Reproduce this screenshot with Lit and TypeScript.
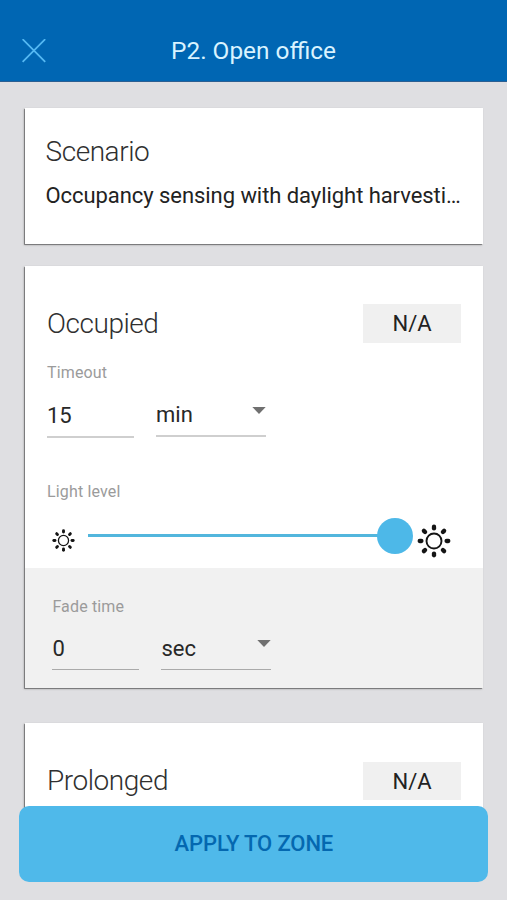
import { LitElement, html, css, svg } from "lit";
import { customElement, property } from "lit/decorators.js";

@customElement("sun-icon")
class SunIcon extends LitElement {
  static styles = css`
    :host { display: block; flex: none; }
    svg { display: block; width: 100%; height: 100%; overflow: visible; }
  `;
  @property({ type: Number }) core = 7.5;
  @property({ type: Number }) ring = 1.9;
  @property({ type: Number }) inner = 12.6;
  @property({ type: Number }) outer = 14.3;
  @property({ type: Number }) ray = 4.3;
  render() {
    return html`<svg viewBox="-17 -17 34 34" fill="none" stroke="#151515">
      <circle r=${this.core} stroke-width=${this.ring}></circle>
      ${[0, 45, 90, 135, 180, 225, 270, 315].map(
        (a) => svg`<line x1="0" x2="0" y1=${-this.inner} y2=${-this.outer}
          stroke-width=${this.ray} stroke-linecap="round" transform="rotate(${a})"></line>`
      )}
    </svg>`;
  }
}

@customElement("time-field")
class TimeField extends LitElement {
  static styles = css`
    :host { display: block; }
    .label { font-size: 16px; line-height: 20px; letter-spacing: 0.15px; color: #9b9b9b; }
    .row { display: flex; gap: 22px; margin-top: 19px; align-items: flex-start; }
    .box {
      box-sizing: border-box; height: 36px; line-height: 28px; font-size: 22px;
      color: #282828; border-bottom: 2px solid #cfcfcf;
    }
    .value { width: 87px; letter-spacing: -0.2px; }
    .unit { width: 110px; height: 35px; line-height: 25px; display: flex; justify-content: space-between; }
    .arrow { width: 14px; height: 7px; margin-top: 5px; fill: #707070; }
    :host([shaded]) .box { border-bottom: 1px solid #aaa; height: 35px; line-height: 28px; }
    :host([shaded]) .label { padding-top: 1px; margin-bottom: -1px; }
  `;
  @property() label = "";
  @property() value = "";
  @property() unit = "";
  render() {
    return html`
      <div class="label">${this.label}</div>
      <div class="row">
        <div class="box value">${this.value}</div>
        <div class="box unit">
          <span>${this.unit}</span>
          <svg class="arrow" viewBox="0 0 14 7"><path d="M0.3 0H13.7L7 7Z"></path></svg>
        </div>
      </div>`;
  }
}

@customElement("app-root")
class AppRoot extends LitElement {
  static styles = css`
    :host {
      display: flex; flex-direction: column; position: relative; height: 900px; overflow: hidden;
      background: #dfdfe2; font-family: Roboto, "Liberation Sans", sans-serif;
    }
    .bar {
      flex: none; box-sizing: border-box; height: 82px; padding: 20px 22px 0; background: #0066b3;
      border-bottom: 1px solid #2b5f92;
      display: grid; grid-template-columns: 24px 1fr 24px; align-items: center;
    }
    .close { width: 24px; height: 24px; display: block; }
    .title { font-size: 24.4px; line-height: 30px; text-align: center; color: #d9f3ff; }
    .cards {
      flex: none; box-sizing: border-box; height: 728px; overflow: hidden;
      padding: 26px 24px 0 25px; display: flex; flex-direction: column;
    }
    .card {
      flex: none; box-sizing: border-box; background: #fff;
      box-shadow: -1px 1px 2px rgba(0, 0, 0, 0.3), -1px 1px 0 rgba(0, 0, 0, 0.3);
    }
    .scenario { height: 136px; padding: 28px 18px 0 20.5px; }
    .heading { font-size: 28px; line-height: 32px; font-weight: 300; letter-spacing: -0.45px; color: #303030; }
    .summary {
      margin-top: 14px; font-size: 22px; line-height: 28px; letter-spacing: -0.06px; color: #222; white-space: nowrap;
    }
    .occupied { height: 422px; margin-top: 22px; }
    .prolonged { height: 300px; margin-top: 35px; }
    .head {
      display: flex; justify-content: space-between; align-items: center;
      height: 39px; padding: 38px 22px 0;
    }
    .prolonged .head { padding-top: 39px; height: 38px; }
    .badge {
      width: 98px; height: 39px; line-height: 39px; background: #f0f0f0;
      text-align: center; font-size: 22px; color: #222;
    }
    .prolonged .badge { height: 38px; }
    .timeout { padding: 20px 22px 0; }
    .level { padding: 44px 22px 0; font-size: 16px; line-height: 20px; letter-spacing: 0.15px; color: #9b9b9b; }
    .slider { height: 66px; box-sizing: border-box; padding: 17px 32px 0 26.5px; display: flex; align-items: flex-start; }
    .small { width: 23px; height: 23px; margin-top: 10px; }
    .big { width: 34px; height: 34px; margin-top: 4.5px; }
    .track { position: relative; flex: 1; height: 3px; margin: 15px 21px 0 13.5px; background: #52b6dd; }
    .knob {
      position: absolute; right: -17px; top: -16.5px; width: 36px; height: 36px;
      border-radius: 50%; background: #4db8e8;
    }
    .fade { box-sizing: border-box; height: 120px; padding: 28px 27.4px 0; background: #f1f1f1; }
    .apply {
      position: absolute; left: 19.4px; right: 18.6px; top: 805.5px; height: 76px; border: 0; padding: 0;
      border-radius: 10px; background: #4fb9ea; color: #0468b0; letter-spacing: -0.12px;
      font: 500 22px/76px Roboto, "Liberation Sans", sans-serif; text-align: center;
    }
  `;
  render() {
    return html`
      <header class="bar">
        <svg class="close" viewBox="0 0 24 24" fill="none" stroke="#55b9f3" stroke-width="1.8">
          <path d="M0.6 0.2L23.2 22.8M23.2 0.2L0.6 22.8"></path>
        </svg>
        <div class="title">P2. Open office</div>
      </header>
      <main class="cards">
        <section class="card scenario">
          <div class="heading">Scenario</div>
          <div class="summary">Occupancy sensing with daylight harvesti…</div>
        </section>
        <section class="card occupied">
          <div class="head"><div class="heading">Occupied</div><div class="badge">N/A</div></div>
          <time-field class="timeout" label="Timeout" value="15" unit="min"></time-field>
          <div class="level">Light level</div>
          <div class="slider">
            <sun-icon class="small"></sun-icon>
            <div class="track"><div class="knob"></div></div>
            <sun-icon class="big"></sun-icon>
          </div>
          <time-field class="fade" shaded label="Fade time" value="0" unit="sec"></time-field>
        </section>
        <section class="card prolonged">
          <div class="head"><div class="heading">Prolonged</div><div class="badge">N/A</div></div>
        </section>
      </main>
      <button class="apply">APPLY TO ZONE</button>
    `;
  }
}
